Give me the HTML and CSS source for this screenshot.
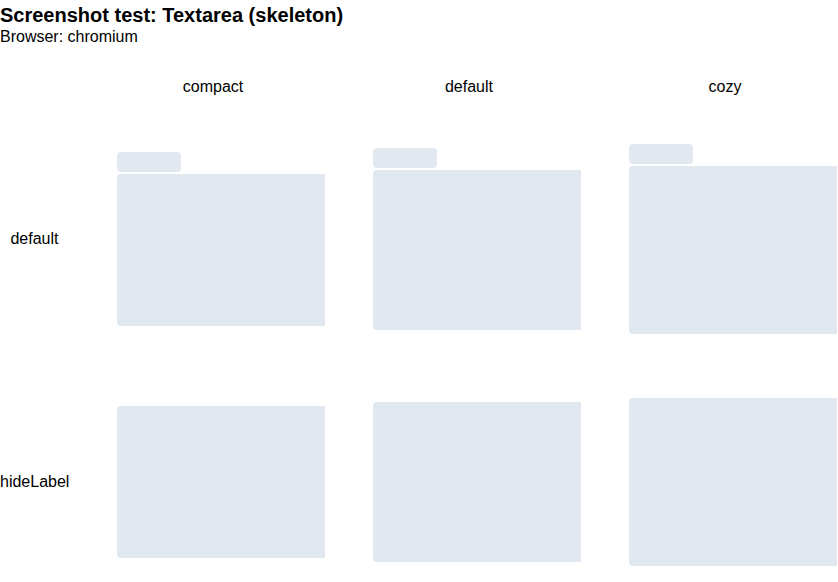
FILE: index.html
```html
<!DOCTYPE html>
<html>
<head>
    <meta charset="utf-8" />
    <title>Screenshot test: Textarea (skeleton)</title>
    <link rel="stylesheet" href="styles.css">
</head>
<body>
    <h1 class="title">Screenshot test: Textarea (skeleton)</h1>
    <p class="subtitle">Browser: chromium</p>

    <div class="matrix">
        <div class="row row-head">
            <div></div>
            <div class="col-head">compact</div>
            <div class="col-head">default</div>
            <div class="col-head">cozy</div>
        </div>

        <div class="row">
            <div class="row-label">default</div>
            <div class="field">
                <div class="sk-label"></div>
                <div class="sk-area compact"></div>
            </div>
            <div class="field">
                <div class="sk-label"></div>
                <div class="sk-area"></div>
            </div>
            <div class="field">
                <div class="sk-label"></div>
                <div class="sk-area cozy"></div>
            </div>
        </div>

        <div class="row">
            <div class="row-label">hideLabel</div>
            <div class="field">
                <div class="sk-area compact"></div>
            </div>
            <div class="field">
                <div class="sk-area"></div>
            </div>
            <div class="field">
                <div class="sk-area cozy"></div>
            </div>
        </div>
    </div>
</body>
</html>
```

FILE: styles.css
```css
body {
    margin: 0;
    font-family: "Liberation Sans", Arial, sans-serif;
    font-size: 16px;
    color: #000;
    background: #fff;
}
.title {
    margin: 0;
    padding-top: 4px;
    font-size: 20px;
    font-weight: bold;
}
.subtitle {
    margin: 1px 0 0;
}

.matrix {
    display: flex;
    flex-direction: column;
    gap: 64px;
    margin-top: 32px;
}
.row {
    display: grid;
    grid-template-columns: 69px 208px 208px 208px;
    column-gap: 48px;
    align-items: center;
}
.row-head {
    margin-bottom: -16px;
}
.col-head {
    text-align: center;
    padding-right: 16px;
}
.row-label {
    text-align: center;
}

.field {
    display: flex;
    flex-direction: column;
    gap: 2px;
}
.sk-label {
    width: 64px;
    height: 20px;
    border-radius: 4px;
    background: #e2e8f0;
}
.sk-area {
    height: 160px;
    border-radius: 4px 0 0 4px;
    background: #e2e8f0;
}
.sk-area.compact {
    height: 152px;
}
.sk-area.cozy {
    height: 168px;
}
```
